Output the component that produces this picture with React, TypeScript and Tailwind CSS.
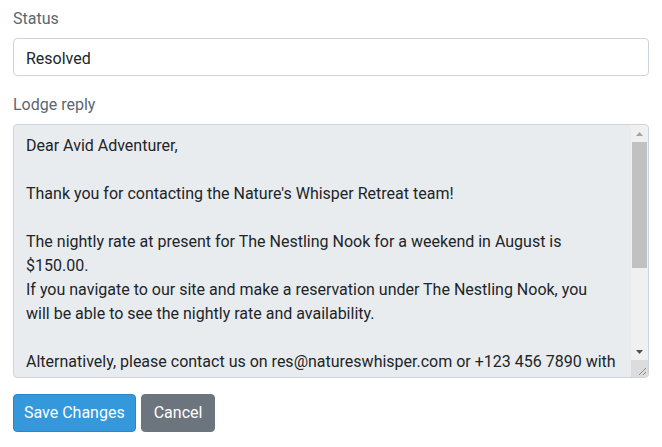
const reply = `Dear Avid Adventurer,

Thank you for contacting the Nature's Whisper Retreat team!

The nightly rate at present for The Nestling Nook for a weekend in August is
$150.00.
If you navigate to our site and make a reservation under The Nestling Nook, you
will be able to see the nightly rate and availability.

Alternatively, please contact us on res@natureswhisper.com or +123 456 7890 with
any further questions and we will be happy to help.

Kind regards,
The Nature's Whisper Retreat team`;

export default function App() {
  return (
    <div className="px-[13px] pt-[7px] bg-white text-base leading-6 text-[#212529] font-['Roboto',sans-serif]">
      {/* Status */}
      <div className="mb-[17px]">
        <label className="block mb-[7px] text-[#5c6670]">Status</label>
        <input
          type="text"
          defaultValue="Resolved"
          className="block w-full h-[38px] px-3 pt-[7px] pb-[5px] border border-[#ced4da] rounded-[4px] bg-white text-[#212529] outline-none"
        />
      </div>

      {/* Reply */}
      <div className="mb-4">
        <label className="block mb-[7px] text-[#5c6670]">Lodge reply</label>
        <div className="flex h-[254px] border border-[#ced4da] rounded-[4px] bg-[#e9ecef] overflow-hidden">
          <textarea
            readOnly
            defaultValue={reply}
            className="flex-1 h-full pl-3 pr-1 pt-[9px] bg-transparent text-[#212529] outline-none resize-none overflow-hidden"
          />
          {/* scrollbar */}
          <div className="w-[17px] flex flex-col bg-[#f0f0f0]">
            <div className="h-[17px] flex items-center justify-center">
              <svg width="7" height="4" viewBox="0 0 7 4">
                <path d="M0 4 L3.5 0 L7 4 Z" fill="#a3a3a3" />
              </svg>
            </div>
            <div className="mx-px h-[126px] bg-[#c1c1c1]" />
            <div className="flex-1" />
            <div className="h-[17px] flex items-center justify-center">
              <svg width="7" height="4" viewBox="0 0 7 4">
                <path d="M0 0 L7 0 L3.5 4 Z" fill="#505050" />
              </svg>
            </div>
            <div className="h-[17px] bg-[#dcdcdc] relative">
              <svg className="absolute right-[2px] bottom-[2px]" width="8" height="8" viewBox="0 0 8 8">
                <path d="M8 1 L1 8 M8 5 L5 8" stroke="#8a8a8a" strokeWidth="1" />
              </svg>
            </div>
          </div>
        </div>
      </div>

      <div className="flex gap-[5px]">
        <button className="h-[38px] px-[10px] rounded-[4px] border border-[#2a86c7] bg-[#3498db] text-white">
          Save Changes
        </button>
        <button className="h-[38px] px-3 rounded-[4px] border border-[#6c757d] bg-[#6c757d] text-white">
          Cancel
        </button>
      </div>
    </div>
  );
}
